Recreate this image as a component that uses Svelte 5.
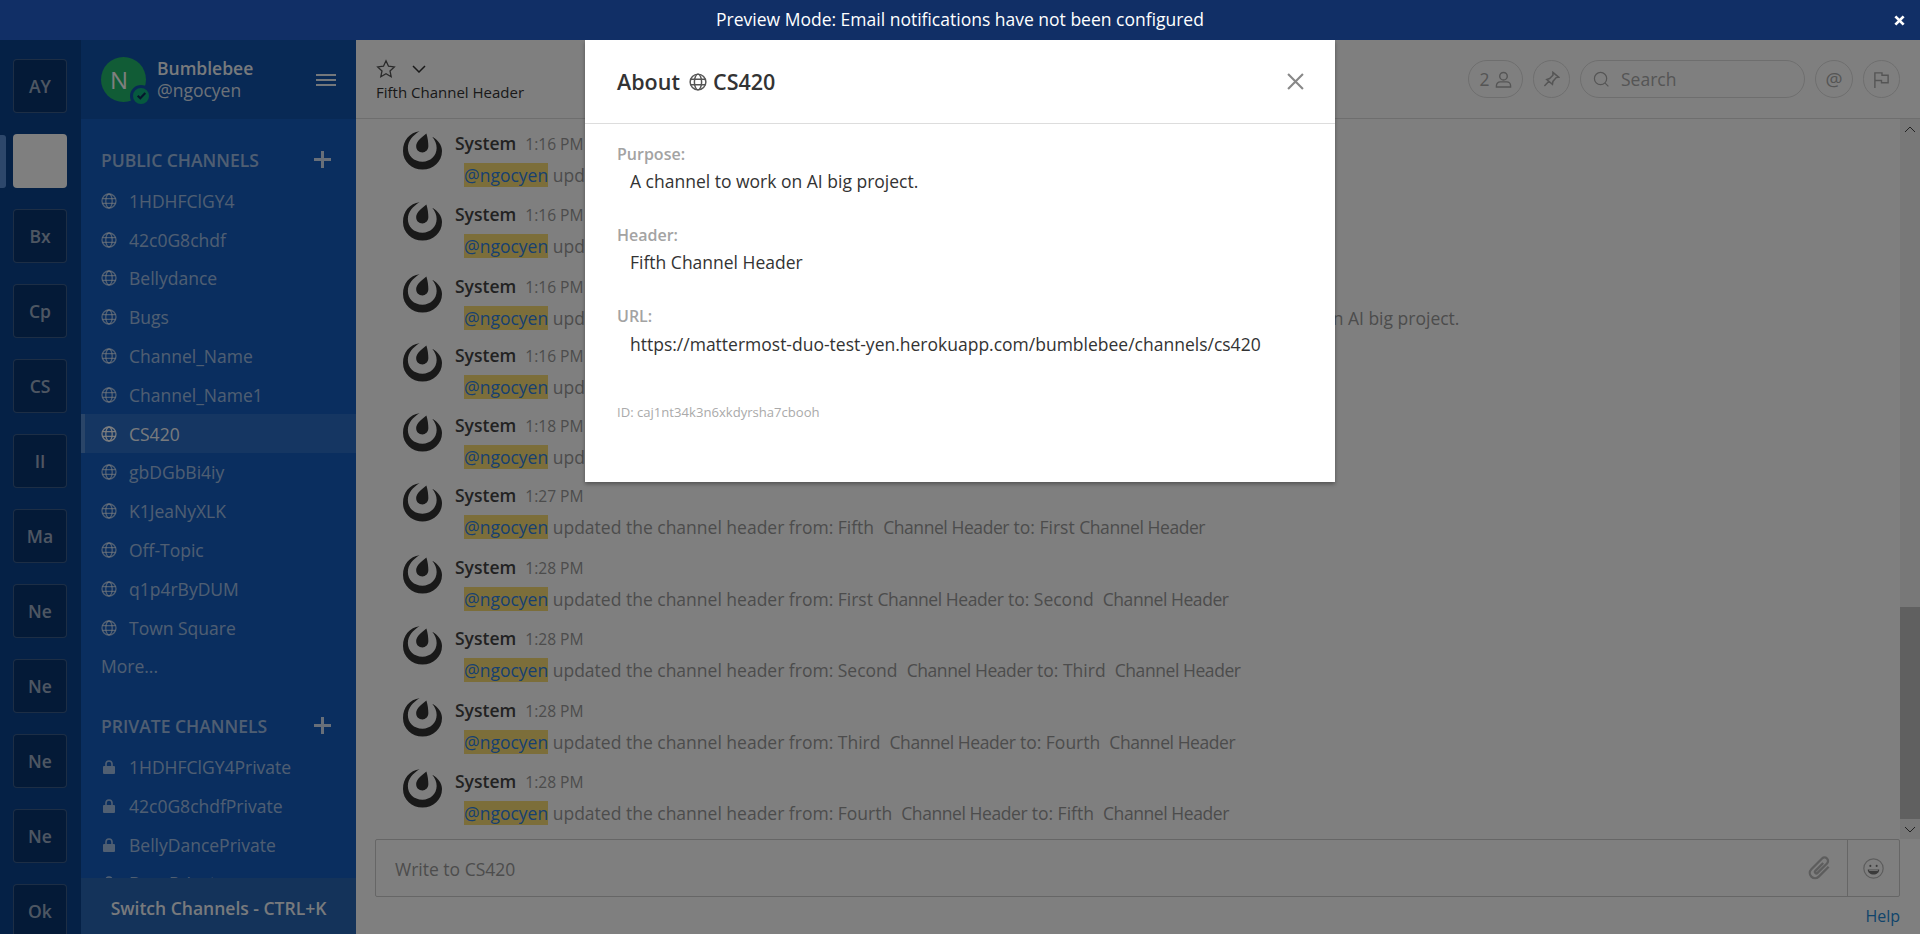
<script>
  const teams = ['AY', '', 'Bx', 'Cp', 'CS', 'II', 'Ma', 'Ne', 'Ne', 'Ne', 'Ne', 'Ok'];
  const pub = ['1HDHFClGY4','42c0G8chdf','Bellydance','Bugs','Channel_Name','Channel_Name1','CS420','gbDGbBi4iy','K1JeaNyXLK','Off-Topic','q1p4rByDUM','Town Square'];
  const priv = ['1HDHFClGY4Private','42c0G8chdfPrivate','BellyDancePrivate','BugsPrivate'];
  const posts = [
    [71,'1:16 PM','updated the channel header from: Fourth  Channel Header to: Fifth  Channel Header'],
    [72,'1:16 PM','updated the channel header from: Fifth  Channel Header to: Fifth Channel Header'],
    [69,'1:16 PM','updated the channel purpose from: A channel to work on AI  big project. to: A channel to work on AI big project.'],
    [70,'1:16 PM','updated the channel header from: Fifth Channel Header to: Fifth  Channel Header'],
    [70,'1:18 PM','updated the channel header from: Fifth  Channel Header to: Fifth Channel Header'],
    [72,'1:27 PM','updated the channel header from: Fifth  Channel Header to: First Channel Header'],
    [71,'1:28 PM','updated the channel header from: First Channel Header to: Second  Channel Header'],
    [72,'1:28 PM','updated the channel header from: Second  Channel Header to: Third  Channel Header'],
    [71,'1:28 PM','updated the channel header from: Third  Channel Header to: Fourth  Channel Header'],
    [71,'1:28 PM','updated the channel header from: Fourth  Channel Header to: Fifth  Channel Header']
  ];
</script>

{#snippet globe(cls)}
  <svg class={cls} viewBox="0 0 16 16" fill="none" stroke="currentColor" stroke-width="1.3">
    <circle cx="8" cy="8" r="7"/><ellipse cx="8" cy="8" rx="3.2" ry="7"/><path d="M1.4 5.6h13.2M1.4 10.4h13.2"/>
  </svg>
{/snippet}

<div class="banner">
  <span>Preview Mode: Email notifications have not been configured</span>
  <svg class="banner-x" viewBox="0 0 12 12" stroke="#fff" stroke-width="3"><path d="M1.500 1.500l9 9M10.500 1.500l-9 9"/></svg>
</div>

<div class="app">
  <nav class="teams">
    {#each teams as t, i}
      <div class="team-row">
        {#if i === 1}<i class="active-bar"></i>{/if}
        <div class="team" class:blank={i === 1}>{t}</div>
      </div>
    {/each}
  </nav>

  <aside class="side">
    <header class="side-head">
      <div class="avatar">N
        <span class="status"><svg viewBox="0 0 12 12" fill="none" stroke="#0b2c5a" stroke-width="2"><path d="M2.500 6.200l2.400 2.400 4.600-4.800"/></svg></span>
      </div>
      <div class="who"><b>Bumblebee</b><span>@ngocyen</span></div>
      <div class="burger"><i></i><i></i><i></i></div>
    </header>
    <div class="lists">
      <div class="sec-head"><span>PUBLIC CHANNELS</span><em class="plus"></em></div>
      {#each pub as c}
        <div class="chan" class:cur={c === 'CS420'}>{@render globe('ico')}<span>{c}</span></div>
      {/each}
      <div class="more">More...</div>
      <div class="sec-head priv"><span>PRIVATE CHANNELS</span><em class="plus"></em></div>
      {#each priv as c}
        <div class="chan">
          <svg class="ico" viewBox="0 0 16 16" fill="currentColor"><path d="M3 7h1.200V5a3.800 3.800 0 0 1 7.600 0v2H13a1 1 0 0 1 1 1v6a1 1 0 0 1-1 1H3a1 1 0 0 1-1-1V8a1 1 0 0 1 1-1zm2.800 0h4.400V5a2.200 2.200 0 0 0-4.400 0z"/></svg>
          <span>{c}</span>
        </div>
      {/each}
    </div>
    <div class="switch">Switch Channels - CTRL+K</div>
  </aside>

  <main class="center">
    <header class="top">
      <div class="title">
        <div class="title-icons">
          <svg class="star" viewBox="0 0 20 20" fill="none" stroke="#555" stroke-width="1.300"><path d="M10 1.800l2.500 5.400 5.800.7-4.300 4 1.200 5.800L10 14.800l-5.200 2.900L6 11.900l-4.300-4 5.800-.7z"/></svg>
          <svg class="chev" viewBox="0 0 14 8" fill="none" stroke="#333" stroke-width="1.500"><path d="M1 1l6 6 6-6"/></svg>
        </div>
        <div class="desc">Fifth Channel Header</div>
      </div>
      <div class="tools">
        <div class="pill members">2
          <svg viewBox="0 0 18 18" fill="none" stroke="currentColor" stroke-width="1.500"><circle cx="9" cy="5.500" r="4"/><path d="M1.500 17v-1.500a4 4 0 0 1 4-4h7a4 4 0 0 1 4 4V17z"/></svg>
        </div>
        <div class="pill round">
          <svg viewBox="0 0 18 18" fill="none" stroke="currentColor" stroke-width="1.600"><path d="M10.500 1.500l6 5-2.500.5-3.500 4-.5 3-6-5 3-1 3.500-3.500zM6.500 10.500l-5 5.500"/></svg>
        </div>
        <div class="pill search">
          <svg viewBox="0 0 18 18" fill="none" stroke="currentColor" stroke-width="1.300"><circle cx="8" cy="8" r="6.500"/><path d="M12.800 12.800l3.500 3.500"/></svg>
          <span>Search</span>
        </div>
        <div class="pill round at">@</div>
        <div class="pill round">
          <svg viewBox="0 0 18 18" fill="none" stroke="currentColor" stroke-width="1.500"><path d="M2 18V2h7.500v2.500H16v8H9V10H2"/></svg>
        </div>
      </div>
    </header>

    <div class="body">
      <div class="posts">
        {#each posts as p}
          <article class="post" style="height:{p[0]}px">
            <svg class="logo" viewBox="0 0 40 40">
              <path fill="#333" d="M17 .8C7 2 0 10 0 21c0 11 9 19 20 19s20-8 20-19c0-6-4-11-10-14.500 3 3.500 4.500 7.500 4.500 11.500 0 8-6.500 14-14.500 14-9 0-15-6-15-14C5 11 10 5 17 .8z"/>
              <path fill="#333" d="M24 3c1.500 5 2 9 2 13 0 4-3 6.500-6 6.500-4 0-6.500-2.500-6.500-6.500 0-5 5.500-9 10.500-13z"/>
            </svg>
            <div class="post-main">
              <div class="post-head"><b>System</b><time>{p[1]}</time></div>
              <div class="post-text"><mark>@ngocyen</mark> {#each p[2].split('Channel Header') as part, i}{#if i > 0}<span class="tight">Channel Header</span>{/if}{part}{/each}</div>
            </div>
          </article>
        {/each}
      </div>
      <div class="scroll">
        <div class="arrow"><svg viewBox="0 0 12 7" fill="none" stroke="#444" stroke-width="1"><path d="M1 6l5-5 5 5"/></svg></div>
        <div class="track"><div class="thumb"></div></div>
        <div class="arrow"><svg viewBox="0 0 12 7" fill="none" stroke="#444" stroke-width="1"><path d="M1 1l5 5 5-5"/></svg></div>
      </div>
    </div>

    <footer class="foot">
      <div class="composer">
        <div class="write">Write to CS420</div>
        <svg class="clip" viewBox="0 0 24 24" fill="none" stroke="#bbb" stroke-width="2"><path transform="rotate(45 12 12)" d="M16.500 6v12a4.500 4.500 0 0 1-9 0V5a3 3 0 0 1 6 0v11.500a1.300 1.300 0 0 1-2.600 0V7"/></svg>
        <div class="emoji">
          <svg viewBox="0 0 20 20" fill="none" stroke="#bbb" stroke-width="1.200"><circle cx="10" cy="10" r="9.200"/><circle cx="7" cy="7.500" r="1" fill="#777" stroke="none"/><circle cx="13" cy="7.500" r="1" fill="#777" stroke="none"/><path fill="#777" stroke="none" d="M4.500 11h11c0 2.800-2.400 4.800-5.500 4.800S4.500 13.800 4.500 11z"/><path fill="#ddd" stroke="none" d="M5.500 11h9l-.5 1.300H6z"/></svg>
        </div>
      </div>
      <div class="help">Help</div>
    </footer>
  </main>

  <div class="overlay"></div>

  <section class="modal">
    <header class="m-head">
      <h1>About {@render globe('m-globe')} CS420</h1>
      <svg class="m-x" viewBox="0 0 16 16" stroke="#888" stroke-width="2"><path d="M1 1l14 14M15 1L1 15"/></svg>
    </header>
    <div class="m-body">
      <div class="lbl">Purpose:</div>
      <div class="val">A channel to work on AI big project.</div>
      <div class="lbl">Header:</div>
      <div class="val">Fifth Channel Header</div>
      <div class="lbl">URL:</div>
      <div class="val url">https://mattermost-duo-test-yen.herokuapp.com/bumblebee/channels/cs420</div>
      <div class="id">ID: caj1nt34k3n6xkdyrsha7cbooh</div>
    </div>
  </section>
</div>

<style>
  :global(body) { margin: 0; font-family: "Open Sans", sans-serif; overflow: hidden; background: #fff; }
  .banner { height: 40px; box-sizing: border-box; padding-bottom: 2px; background: #112f66; color: #fff; font-size: 17.500px; display: flex; align-items: center; justify-content: center; position: relative; z-index: 5; }
  .banner-x { position: absolute; right: 15px; top: 15px; width: 11px; height: 11px; }
  .app { position: relative; height: 894px; display: flex; overflow: hidden; }
  .overlay { position: absolute; inset: 0; background: rgba(0,0,0,.5); }

  .teams { width: 81px; flex: none; background: #0b428c; padding-top: 19px; display: flex; flex-direction: column; gap: 21px; box-sizing: border-box; }
  .team-row { position: relative; padding-left: 13px; }
  .active-bar { position: absolute; left: 0; top: 1px; width: 6px; height: 53px; border-radius: 0 3px 3px 0; background: #5b8fd6; }
  .team { width: 54px; height: 54px; box-sizing: border-box; border: 1px solid rgba(255,255,255,.2); border-radius: 4px; background: #09346f; color: rgba(255,255,255,.62); font-weight: 600; font-size: 17.500px; display: flex; align-items: center; justify-content: center; }
  .team.blank { background: #fff; }

  .side { width: 275px; flex: none; background: #145dbf; color: rgba(255,255,255,.6); position: relative; display: flex; flex-direction: column; overflow: hidden; }
  .side-head { height: 79px; flex: none; background: #1153ab; padding-left: 20px; display: flex; align-items: center; position: relative; box-sizing: border-box; }
  .avatar { width: 45px; height: 45px; box-sizing: border-box; padding-right: 9px; border-radius: 50%; background: #22b86c; color: #fff; font-size: 24px; display: flex; align-items: center; justify-content: center; position: relative; margin-top: -1px; }
  .status { position: absolute; right: -6px; bottom: -5px; width: 16px; height: 16px; border-radius: 50%; background: #0cb27e; border: 3px solid #1153ab; display: flex; align-items: center; justify-content: center; }
  .status svg { width: 13px; height: 13px; }
  .who { margin-left: 11px; display: flex; flex-direction: column; line-height: 22px; font-size: 17.500px; color: rgba(255,255,255,.95); margin-top: -1px; }
  .who b { font-weight: 600; }
  .who span { color: rgba(255,255,255,.85); }
  .burger { position: absolute; left: 235px; top: 34px; display: flex; flex-direction: column; gap: 3px; }
  .burger i { display: block; width: 20px; height: 2px; background: #fff; opacity: .9; }
  .lists { padding-top: 26.500px; flex: 1; overflow: hidden; }
  .sec-head { height: 28px; padding: 0 25px 0 20px; display: flex; justify-content: space-between; align-items: center; font-size: 17.500px; font-weight: 600; margin-bottom: 8px; }
  .sec-head.priv { margin-top: 26.500px; }
  .plus { display: block; width: 17px; height: 17px; background: linear-gradient(#fff,#fff) center/100% 3px no-repeat, linear-gradient(#fff,#fff) center/3px 100% no-repeat; opacity: .8; }
  .chan { height: 38.800px; display: flex; align-items: center; padding-left: 20px; font-size: 17.500px; box-sizing: border-box; }
  .chan.cur { background: rgba(255,255,255,.1); color: rgba(255,255,255,.95); border-left: 4px solid rgba(255,255,255,.2); padding-left: 16px; }
  .ico { width: 16px; height: 16px; margin-right: 12px; flex: none; }
  .more { height: 38px; line-height: 38px; padding-left: 20px; font-size: 17.500px; }
  .switch { position: absolute; left: 0; right: 0; bottom: 0; height: 56px; box-sizing: border-box; padding-top: 3px; background: #2866b4; color: rgba(255,255,255,.95); font-weight: 600; font-size: 17.500px; display: flex; align-items: center; justify-content: center; }

  .center { flex: 1; min-width: 0; display: flex; flex-direction: column; background: #fff; }
  .top { height: 79px; flex: none; box-sizing: border-box; border-bottom: 1px solid #ddd; display: flex; justify-content: space-between; padding: 0 20px 0 20px; }
  .title { padding-top: 17px; }
  .title-icons { display: flex; align-items: center; gap: 16px; height: 24px; }
  .star { width: 20px; height: 20px; }
  .chev { width: 14px; height: 8px; }
  .desc { font-size: 15px; color: #333; line-height: 20px; margin-top: 1px; }
  .tools { display: flex; gap: 10px; padding-top: 20px; color: #aaa; }
  .pill { height: 38px; box-sizing: border-box; border: 1px solid #ddd; border-radius: 19px; display: flex; align-items: center; justify-content: center; font-size: 17.500px; }
  .pill svg { width: 17px; height: 17px; }
  .members { width: 55px; gap: 5px; }
  .round { width: 37px; }
  .at { font-size: 19px; width: 38px; }
  .search { width: 225px; justify-content: flex-start; padding-left: 12px; gap: 11px; }
  .search span { font-size: 17.500px; }

  .body { flex: 1; min-height: 0; display: flex; overflow: hidden; }
  .posts { flex: 1; min-width: 0; padding: 11px 0 0 47px; overflow: hidden; }
  .post { display: flex; }
  .logo { width: 39px; height: 40px; flex: none; }
  .post-main { margin-left: 13px; }
  .post-head { font-size: 17.500px; line-height: 24px; display: flex; align-items: baseline; gap: 9px; margin-top: 1px; }
  .post-head b { font-weight: 600; color: #444; }
  .post-head time { font-size: 15.600px; color: #999; }
  .post-text { margin: 7px 0 0 9px; font-size: 17.500px; line-height: 24px; color: #999; white-space: pre; }
  .tight { letter-spacing: -.43px; }
  mark { background: #f9dd75; color: #2f80e0; }
  .scroll { width: 20px; flex: none; display: flex; flex-direction: column; background: #f1f1f1; }
  .arrow { height: 20px; display: flex; align-items: center; justify-content: center; }
  .arrow svg { width: 12px; height: 7px; }
  .track { flex: 1; position: relative; }
  .thumb { position: absolute; left: 0; right: 0; bottom: 0; height: 212px; background: #c1c1c1; }

  .foot { height: 95px; flex: none; padding: 0 20px 0 19px; background: #fff; }
  .composer { height: 58px; box-sizing: border-box; border: 1px solid #ccc; border-radius: 2px; display: flex; align-items: center; position: relative; }
  .write { flex: 1; padding: 2px 0 0 19px; font-size: 17.500px; color: #999; }
  .clip { width: 28px; height: 28px; margin-right: 13px; }
  .emoji { width: 52px; height: 100%; border-left: 1px solid #ccc; display: flex; align-items: center; justify-content: center; box-sizing: border-box; }
  .emoji svg { width: 21px; height: 21px; }
  .help { text-align: right; font-size: 16px; color: #2389d7; line-height: 22px; margin-top: 8px; }

  .modal { position: absolute; left: 585px; top: 0; width: 750px; height: 442px; background: #fff; box-shadow: 0 2px 4px rgba(0,0,0,.35); color: #333; }
  .m-head { height: 84px; box-sizing: border-box; border-bottom: 1px solid #ddd; padding: 0 32px; display: flex; align-items: center; justify-content: space-between; }
  h1 { margin: 0; font-size: 21.500px; font-weight: 600; display: flex; align-items: center; gap: 0; white-space: pre; }
  .m-globe { width: 18px; height: 18px; margin: 0 0 0 4px; color: #555; }
  .m-x { width: 17px; height: 17px; margin-right: -1px; }
  .m-body { padding: 18px 33px 0 32px; font-size: 17.500px; }
  .lbl { font-weight: 600; font-size: 16px; color: #a3a3a3; line-height: 24px; }
  .val { padding-left: 13px; line-height: 24px; margin-top: 3px; margin-bottom: 30px; }
  .url { margin-top: 4px; }
  .id { font-size: 13.100px; color: #aaa; margin-top: 47px; padding-left: 0; line-height: 18px; }
</style>
